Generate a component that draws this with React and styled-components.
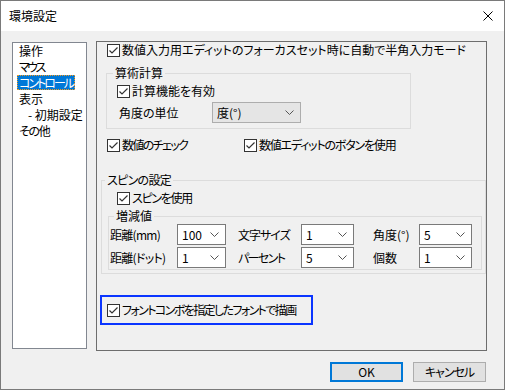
import styled, { createGlobalStyle } from 'styled-components'

const GlobalStyle = createGlobalStyle`
  html, body { margin: 0; padding: 0; background: #fff; }
  body {
    font-family: "Noto Sans CJK JP", "Noto Sans", sans-serif;
    font-size: 12px;
    color: #000;
    font-feature-settings: "palt";
  }
  * { box-sizing: border-box; }
`

const Window = styled.div`
  width: 505px;
  height: 390px;
  border: 1px solid #7a7a7a;
  background: #f0f0f0;
  display: flex;
  flex-direction: column;
`

const TitleBar = styled.div`
  height: 30px;
  flex-shrink: 0;
  background: #fff;
  display: flex;
  align-items: center;
  justify-content: space-between;
  padding: 0 11px 0 8px;
  line-height: 16px;
`

const Body = styled.div`
  padding: 10px 0 0 11px;
  display: flex;
  flex-direction: column;
`

const MainRow = styled.div`
  display: flex;
  gap: 9px;
  align-items: flex-start;
`

const ListBox = styled.div`
  width: 75px;
  height: 307px;
  margin-top: 1px;
  background: #fff;
  border: 1px solid #828790;
  padding-left: 4px;
`

const ListItem = styled.div`
  height: 16px;
  line-height: 16px;
  padding-left: ${p => p.$indent || 0}px;
  white-space: nowrap;

  span {
    display: inline-block;
    height: 15px;
    line-height: 15px;
    padding: 0 2px;
    letter-spacing: ${p => p.$ls || 0}px;
    background: ${p => (p.$selected ? '#0078d7' : 'transparent')};
    color: ${p => (p.$selected ? '#fff' : '#000')};
    outline: ${p => (p.$selected ? '1px dotted #f39a1e' : 'none')};
    outline-offset: -1px;
  }
`

const Panel = styled.div`
  width: 391px;
  height: 310px;
  border: 1px solid #6d6d6d;
  padding-left: 10px;
  display: flex;
  flex-direction: column;
`

const CheckRow = styled.label`
  display: flex;
  align-items: center;
  gap: 2px;
  height: 16px;
  line-height: 16px;
  white-space: nowrap;
  letter-spacing: ${p => p.$ls || 0}px;
  margin-top: ${p => p.$mt || 0}px;
  margin-left: ${p => p.$ml || 0}px;
`

const Box = styled.span`
  width: 13px;
  height: 13px;
  flex-shrink: 0;
  border: 1px solid #333;
  background: #fff;
  display: flex;
  align-items: center;
  justify-content: center;
`

const PairRow = styled.div`
  display: grid;
  grid-template-columns: 137px auto;
  margin-top: ${p => p.$mt || 0}px;
`

const Group = styled.fieldset`
  margin: ${p => p.$mt || 0}px 0 0 ${p => p.$ml || 0}px;
  padding: 0 0 ${p => p.$pb || 0}px 0;
  width: ${p => p.$w}px;
  min-width: 0;
  border: 1px solid #dcdcdc;

  legend {
    padding: 0 2px;
    margin-left: ${p => p.$lx || 0}px;
    height: 16px;
    line-height: 16px;
    letter-spacing: ${p => p.$ls || 0}px;
  }
`

const FieldRow = styled.div`
  display: flex;
  align-items: center;
  margin: ${p => p.$mt || 0}px 0 0 ${p => p.$ml || 0}px;
`

const FieldLabel = styled.span`
  width: ${p => p.$w || 'auto'};
  letter-spacing: ${p => p.$ls || 0}px;
  white-space: nowrap;
`

const Select = styled.div`
  width: ${p => p.$w}px;
  height: 21px;
  border: 1px solid ${p => (p.$gray ? '#adadad' : '#7a7a7a')};
  background: ${p => (p.$gray ? '#e5e5e5' : '#fff')};
  display: flex;
  align-items: center;
  justify-content: space-between;
  padding: 0 6px 0 4px;
  line-height: 16px;
  white-space: nowrap;
`

const ValueGrid = styled.div`
  display: grid;
  grid-template-columns: 67px 61px 63px 72px 46px 53px;
  grid-auto-rows: 21px;
  row-gap: 2px;
  align-items: center;
  padding: 0 0 1px 1px;
`

const Highlight = styled.div`
  width: 213px;
  height: 30px;
  margin: 21px 0 0 -7px;
  border: 2px solid #0a35ff;
  padding-left: 5px;
  display: flex;
  align-items: center;
`

const ButtonRow = styled.div`
  display: flex;
  justify-content: flex-end;
  gap: 10px;
  margin-top: 11px;
  padding-right: 18px;
`

const Button = styled.button`
  width: 73px;
  height: 20px;
  padding: 0;
  font: inherit;
  line-height: 16px;
  letter-spacing: ${p => p.$ls || 0}px;
  color: #000;
  background: #e1e1e1;
  border: ${p => (p.$primary ? '2px solid #0078d7' : '1px solid #adadad')};
`

const Check = ({ children, mt, ml, ls }) => (
  <CheckRow $mt={mt} $ml={ml} $ls={ls}>
    <Box>
      <svg width="11" height="11" viewBox="0 0 11 11">
        <polyline points="1.5,5.5 4,8 9.5,2.5" fill="none" stroke="#333" strokeWidth="1.2" />
      </svg>
    </Box>
    {children}
  </CheckRow>
)

const Chevron = () => (
  <svg width="9" height="5" viewBox="0 0 9 5">
    <polyline points="0.5,0.5 4.5,4.5 8.5,0.5" fill="none" stroke="#555" strokeWidth="1" />
  </svg>
)

const Combo = ({ value, w, gray }) => (
  <Select $w={w} $gray={gray}>
    <span>{value}</span>
    <Chevron />
  </Select>
)

export default function App() {
  return (
    <>
      <GlobalStyle />
      <Window>
        <TitleBar>
          <span>環境設定</span>
          <svg width="10" height="10" viewBox="0 0 10 10">
            <path d="M0.5 0.5 L9.5 9.5 M9.5 0.5 L0.5 9.5" stroke="#000" strokeWidth="1" />
          </svg>
        </TitleBar>
        <Body>
          <MainRow>
            <ListBox>
              <ListItem><span>操作</span></ListItem>
              <ListItem $ls={-2.5}><span>マウス</span></ListItem>
              <ListItem $selected $ls={-2}><span>コントロール</span></ListItem>
              <ListItem><span>表示</span></ListItem>
              <ListItem $indent={9}><span>- 初期設定</span></ListItem>
              <ListItem $ls={-1.3}><span>その他</span></ListItem>
            </ListBox>
            <Panel>
              <Check>数値入力用エディットのフォーカスセット時に自動で半角入力モード</Check>

              <Group $mt={7} $ml={-1} $w={305} $pb={5} $lx={6}>
                <legend>算術計算</legend>
                <Check mt={2} ml={10}>計算機能を有効</Check>
                <FieldRow $mt={3} $ml={12}>
                  <FieldLabel $w="93px">角度の単位</FieldLabel>
                  <Combo value="度(°)" w={89} gray />
                </FieldRow>
              </Group>

              <PairRow $mt={8}>
                <Check ls={-1.6}>数値のチェック</Check>
                <Check ls={-1.2}>数値エディットのボタンを使用</Check>
              </PairRow>

              <Group $mt={19} $ml={-6} $w={385} $pb={3} $lx={3} $ls={-0.7}>
                <legend>スピンの設定</legend>
                <Check mt={2} ml={15} ls={-1.3}>スピンを使用</Check>
                <Group $mt={2} $ml={6} $w={374} $lx={5}>
                  <legend>増減値</legend>
                  <ValueGrid>
                    <FieldLabel $ls={-0.7}>距離(mm)</FieldLabel>
                    <Combo value="100" w={49} />
                    <FieldLabel $ls={-1}>文字サイズ</FieldLabel>
                    <Combo value="1" w={53} />
                    <FieldLabel>角度(°)</FieldLabel>
                    <Combo value="5" w={53} />
                    <FieldLabel $ls={-0.7}>距離(ドット)</FieldLabel>
                    <Combo value="1" w={49} />
                    <FieldLabel $ls={-1.6}>パーセント</FieldLabel>
                    <Combo value="5" w={53} />
                    <FieldLabel>個数</FieldLabel>
                    <Combo value="1" w={53} />
                  </ValueGrid>
                </Group>
              </Group>

              <Highlight>
                <Check ls={-1.6}>フォントコンボを指定したフォントで描画</Check>
              </Highlight>
            </Panel>
          </MainRow>
          <ButtonRow>
            <Button $primary>OK</Button>
            <Button $ls={-1}>キャンセル</Button>
          </ButtonRow>
        </Body>
      </Window>
    </>
  )
}
